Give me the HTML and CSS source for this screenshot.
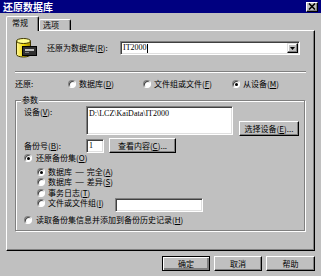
FILE: index.html
```html
<html>

<head>
	<meta charset="utf-8">
	<link rel="stylesheet" href="styles.css">
</head>

<body>
	<div class="titlebar">
		<span class="title">还原数据库</span>
		<span class="close">
			<svg width="8" height="7" viewBox="0 0 8 7">
				<path d="M1 0.5 L7 6.5 M7 0.5 L1 6.5" stroke="#000" stroke-width="1.6" />
			</svg>
		</span>
	</div>

	<!-- tab strip -->
	<div class="tabs">
		<div class="tab active">常规</div>
		<div class="tab">选项</div>
	</div>

	<div class="panel">
		<div class="target">
			<svg class="dbicon" width="22" height="20" viewBox="0 0 22 20">
				<defs>
					<linearGradient id="cyl" x1="0" x2="1" y1="0" y2="0">
						<stop offset="0" stop-color="#fff7a0" />
						<stop offset="0.5" stop-color="#f0d800" />
						<stop offset="1" stop-color="#a08800" />
					</linearGradient>
				</defs>
				<path d="M0.5 3 V16.5 A7 2.5 0 0 0 14.5 16.5 V3" fill="url(#cyl)" stroke="#403800" />
				<ellipse cx="7.5" cy="3" rx="7" ry="2.5" fill="#ffff90" stroke="#403800" />
				<rect x="6.5" y="8.5" width="14" height="9" fill="#303030" stroke="#000" />
				<rect x="9" y="11" width="9" height="2" fill="#c0c0c0" />
				<rect x="9" y="14" width="4" height="1" fill="#808080" />
			</svg>
			<span class="target-label">还原为数据库(<u>R</u>):</span>
			<div class="combo">
				<span class="combo-text">IT2000</span><span class="caret"></span>
				<span class="drop">
					<svg width="5" height="3" viewBox="0 0 5 3">
						<path d="M0 0 H5 L2.5 3 Z" fill="#000" />
					</svg>
				</span>
			</div>
		</div>

		<div class="sep"></div>

		<div class="restore">
			<span class="restore-label">还原:</span>
			<span class="opt opt1"><span class="radio"></span><span class="rtext">数据库(<u>D</u>)</span></span>
			<span class="opt opt2"><span class="radio"></span><span class="rtext">文件组或文件(<u>F</u>)</span></span>
			<span class="opt"><span class="radio on"></span><span class="rtext">从设备(<u>M</u>)</span></span>
		</div>

		<div class="group">
			<div class="legend">参数</div>

			<div class="device-row">
				<span class="field-label lbl-top">设备(<u>V</u>):</span>
				<div class="area">D:\LCZ\KaiData\IT2000</div>
				<div class="btn btn-select">选择设备(<u>E</u>)...</div>
			</div>

			<div class="num-row">
				<span class="field-label">备份号(<u>B</u>):</span>
				<div class="num">1</div>
				<div class="btn btn-view">查看内容(<u>C</u>)...</div>
			</div>

			<div class="radio-row">
				<span class="radio on"></span><span class="rtext">还原备份集(<u>O</u>)</span>
			</div>

			<div class="subs">
				<div class="sub"><span class="radio on"></span><span class="rtext">数据库 <span class="dash">—</span> 完全(<u>A</u>)</span></div>
				<div class="sub"><span class="radio"></span><span class="rtext">数据库 <span class="dash">—</span> 差异(<u>S</u>)</span></div>
				<div class="sub"><span class="radio"></span><span class="rtext">事务日志(<u>T</u>)</span></div>
				<div class="sub"><span class="radio"></span><span class="rtext file-label">文件或文件组(<u>I</u>)</span>
					<div class="file-box"></div>
				</div>
			</div>

			<div class="radio-row last">
				<span class="radio"></span><span class="rtext">读取备份集信息并添加到备份历史记录(<u>H</u>)</span>
			</div>
		</div>
	</div>

	<div class="buttons">
		<div class="btn dlg default">确定</div>
		<div class="btn dlg">取消</div>
		<div class="btn dlg help">帮助</div>
	</div>
</body>

</html>
```

FILE: styles.css
```css
* {
	box-sizing: border-box;
}

body {
	margin: 0;
	width: 321px;
	height: 276px;
	overflow: hidden;
	background: #c0c0c0;
	font-family: "Noto Sans CJK SC", "Noto Sans", sans-serif;
	font-size: 8px;
	line-height: 10px;
	color: #000;
}

u {
	text-decoration: underline;
}

/* window caption */
.titlebar {
	height: 13px;
	background: #000080;
	display: flex;
	align-items: center;
	justify-content: space-between;
	padding: 0 3px 0 3px;
}

.title {
	color: #fff;
	font-size: 10px;
	line-height: 12px;
	font-weight: bold;
}

.close {
	width: 12px;
	height: 10px;
	background: #c0c0c0;
	border: 1px solid;
	border-color: #fff #000 #000 #fff;
	box-shadow: inset -1px -1px #808080;
	display: flex;
	align-items: center;
	justify-content: center;
}

/* tabs */
.tabs {
	height: 17px;
	display: flex;
	align-items: flex-end;
	padding-left: 6px;
}

.tab {
	height: 11px;
	width: 32px;
	padding-left: 3px;
	border: 1px solid;
	border-bottom: 0;
	border-color: #fff #000 #000 #fff;
	border-radius: 2px 2px 0 0;
	box-shadow: inset -1px 0 #808080;
	background: #c0c0c0;
	line-height: 10px;
}

.tab.active {
	height: 15px;
	width: 33px;
	padding-left: 5px;
	padding-top: 1px;
	margin-bottom: -1px;
	position: relative;
	z-index: 1;
}

.panel {
	margin-left: 6px;
	width: 309px;
	height: 221px;
	border: 1px solid;
	border-color: #fff #000 #000 #fff;
	box-shadow: inset -1px -1px #808080;
}

/* sunken fields */
.combo,
.area,
.num,
.file-box {
	background: #fff;
	border: 1px solid;
	border-color: #808080 #fff #fff #808080;
	box-shadow: inset 1px 1px #404040, inset -1px -1px #dfdfdf;
}

.target {
	display: flex;
	align-items: center;
	height: 20px;
	margin: 7px 0 0 9px;
}

.target-label {
	margin-left: 9px;
	width: 73px;
}

.combo {
	width: 180px;
	height: 14px;
	display: flex;
	align-items: center;
	padding-left: 2px;
}

.combo-text,
.area,
.num {
	font-family: "Liberation Serif", serif;
	font-size: 8px;
}

.caret {
	width: 1px;
	height: 9px;
	background: #000;
}

.drop {
	margin-left: auto;
	margin-right: 1px;
	width: 11px;
	height: 10px;
	background: #c0c0c0;
	border: 1px solid;
	border-color: #dfdfdf #000 #000 #dfdfdf;
	box-shadow: inset -1px -1px #808080, inset 1px 1px #fff;
	display: flex;
	align-items: center;
	justify-content: center;
}

.sep {
	margin: 13px 0 0 8px;
	width: 291px;
	height: 2px;
	border-top: 1px solid #808080;
	border-bottom: 1px solid #fff;
}

.restore {
	display: flex;
	align-items: center;
	height: 12px;
	margin: 5px 0 0 8px;
}

.restore-label {
	width: 53px;
}

.opt {
	display: flex;
	align-items: center;
}

.opt1 {
	width: 75px;
}

.opt2 {
	width: 89px;
}

/* classic radio button */
.radio {
	width: 8px;
	height: 8px;
	flex: none;
	border-radius: 50%;
	background: #fff;
	border: 1px solid;
	border-color: #808080 #fff #fff #808080;
	box-shadow: inset 1px 1px #404040;
	display: inline-flex;
	align-items: center;
	justify-content: center;
}

.radio.on::after {
	content: "";
	width: 3px;
	height: 3px;
	border-radius: 50%;
	background: #000;
}

.rtext {
	margin-left: 3px;
	white-space: nowrap;
}

.dash {
	display: inline-block;
	margin: 0 2px;
	transform: scaleX(1.3);
}

.group {
	margin: 10px 0 0 8px;
	width: 290px;
	height: 131px;
	border: 1px solid #808080;
	box-shadow: inset 1px 1px #fff, 1px 1px #fff;
}

.legend {
	margin: -6px 0 0 5px;
	padding: 0 1px;
	width: fit-content;
	background: #c0c0c0;
}

.device-row {
	display: flex;
	margin: 1px 0 0 8px;
}

.field-label {
	width: 62px;
}

.lbl-top {
	padding-top: 1px;
}

.area {
	width: 147px;
	height: 29px;
	padding: 2px 2px;
	line-height: 9px;
}

.btn {
	background: #c0c0c0;
	border: 1px solid;
	border-color: #fff #000 #000 #fff;
	box-shadow: inset -1px -1px #808080;
	display: flex;
	align-items: center;
	justify-content: center;
	white-space: nowrap;
}

.btn-select {
	margin: 0 0 -1px 6px;
	align-self: flex-end;
	width: 60px;
	height: 15px;
}

.num-row {
	display: flex;
	align-items: center;
	height: 15px;
	margin: 3px 0 0 8px;
}

.num {
	width: 18px;
	height: 14px;
	padding-left: 2px;
	line-height: 12px;
}

.btn-view {
	margin-left: 5px;
	width: 67px;
	height: 15px;
}

.radio-row {
	display: flex;
	align-items: center;
	height: 10px;
	margin-left: 8px;
}

.radio-row .rtext {
	margin-left: 4px;
}

.subs {
	margin: 4px 0 0 21px;
}

.sub {
	display: flex;
	align-items: center;
	height: 10.33px;
}

.file-label {
	width: 67px;
}

.file-box {
	width: 88px;
	height: 14px;
	flex: none;
	margin-top: 3px;
}

.radio-row.last {
	margin-top: 6.67px;
}

/* dialog buttons */
.buttons {
	display: flex;
	justify-content: flex-end;
	gap: 4px;
	padding-right: 6px;
	margin-top: 5px;
}

.dlg {
	width: 48px;
	height: 15px;
}

.dlg.help {
	width: 49px;
}

.dlg.default {
	border-color: #000;
	box-shadow: inset 1px 1px #fff, inset -2px -2px #808080;
}
```
